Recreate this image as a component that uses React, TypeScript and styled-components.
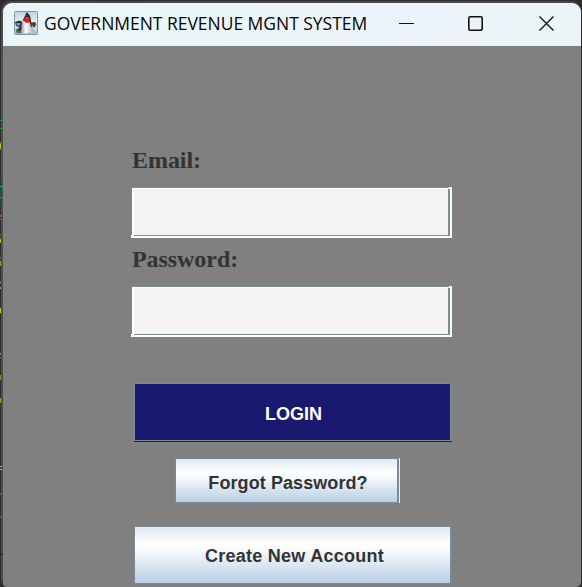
import React from "react";
import styled, { createGlobalStyle } from "styled-components";

const slate = "#7a8a99";

const GlobalStyle = createGlobalStyle`
  * { box-sizing: border-box; }
  html, body { margin: 0; padding: 0; background: #2d2d2e; overflow: hidden; }
`;

const Desktop = styled.div`
  position: relative;
  width: 582px;
  height: 587px;
  padding: 1px 1px 0 1px;
  background: #2d2d2e;
  overflow: hidden;
`;

const Frame = styled.div`
  height: 586px;
  padding: 2px 0 0 2px;
  border-radius: 10px 10px 9px 9px;
  background: linear-gradient(#484848, #505050 60px, #4c4c4c);
`;

const Window = styled.main`
  display: flex;
  flex-direction: column;
  width: 578px;
  height: 584px;
  border-radius: 9px 9px 5px 4px;
  overflow: hidden;
  background: #808080;
`;

const TitleBar = styled.header`
  display: flex;
  align-items: flex-start;
  flex: 0 0 43px;
  padding: 8px 0 0 11px;
  background: linear-gradient(90deg, #e9f6f6 0%, #eaf5f7 40%, #ecf3fb 70%, #ebf4f8 84%, #ebf4f6 100%);
`;

const Title = styled.h1`
  margin: 0 0 0 6px;
  width: 327px;
  font: 400 17.5px/24px "Open Sans", sans-serif;
  letter-spacing: -0.03px;
  white-space: nowrap;
  color: #050505;
`;

const Controls = styled.div`
  display: flex;
  margin: 4px 0 0 28px;
  gap: 54px;
`;

const Form = styled.form`
  display: flex;
  flex-direction: column;
  align-items: flex-start;
  padding: 100px 0 0 128px;
`;

const Label = styled.label`
  height: 41px;
  padding-left: 1px;
  font: 700 24px/29px "Liberation Serif", serif;
  letter-spacing: -0.06px;
  color: #333;
`;

const FieldFrame = styled.div`
  width: 321px;
  height: 51px;
  margin-bottom: 7px;
  background:
    linear-gradient(${slate}, ${slate}) 0 0 / 318px 1px no-repeat,
    linear-gradient(${slate}, ${slate}) 0 0 / 1px 48px no-repeat,
    linear-gradient(${slate}, ${slate}) 317px 2px / 2px 47px no-repeat,
    linear-gradient(${slate}, ${slate}) 3px 48px / 316px 1px no-repeat,
    #fff;
  padding: 2px 4px 3px 3px;
`;

const Field = styled.input`
  display: block;
  width: 314px;
  height: 46px;
  border: 0;
  padding: 0 8px;
  outline: 0;
  background: #f4f4f4;
  font: 18px "Liberation Sans", sans-serif;
`;

const MetalButton = styled.button<{ $primary?: boolean }>`
  width: 318px;
  height: 58px;
  padding: 0;
  border: 1px solid ${slate};
  border-right-width: 2px;
  background: ${(p) => (p.$primary ? "#191970" : "linear-gradient(#dde8f3, #fff 30%, #fff 34%, #b8cfe5)")};
  color: ${(p) => (p.$primary ? "#fff" : "#333")};
  font: 700 18px/20px "Liberation Sans", sans-serif;
`;

const LoginButton = styled(MetalButton)`
  margin: 39px 0 0 3px;
  padding: 4px 0 0 2px;
  box-shadow: 0 1px #191970;
`;

const ForgotButton = styled(MetalButton)`
  width: 224px;
  height: 45px;
  margin: 17px 0 0 44px;
  padding: 4px 0 0 3px;
  letter-spacing: 0.08px;
  box-shadow: 1px 0 #e8f0f7;
`;

const CreateButton = styled(MetalButton)`
  margin: 23px 0 0 3px;
  padding: 1px 0 0 4px;
  letter-spacing: 0.27px;
`;

const Speck = styled.i<{ $y: number; $h: number; $w: number; $color: string }>`
  position: absolute;
  left: 0;
  top: ${(p) => p.$y}px;
  width: ${(p) => p.$w}px;
  height: ${(p) => p.$h}px;
  background: ${(p) => p.$color};
`;

/* Coloured code from the editor showing past the window edge. */
const specks: [number, number, number, string][] = [
  [120, 1, 3, "#268844"], [128, 1, 3, "#268844"], [142, 8, 1, "#8a8a18"], [144, 4, 1, "#85d62d"],
  [181, 24, 2, "#2c493d"], [186, 1, 3, "#13a899"], [197, 1, 3, "#2b8b76"],
  [215, 2, 1, "#d15b2b"], [219, 1, 1, "#925335"], [234, 2, 1, "#775229"],
  [238, 5, 1, "#91852a"], [240, 2, 1, "#8ed72c"], [257, 2, 1, "#755127"],
  [261, 5, 1, "#81a52a"], [281, 3, 1, "#477b43"], [287, 2, 1, "#70ad9b"],
  [308, 5, 1, "#9fda3c"], [353, 2, 1, "#d07428"], [357, 1, 1, "#9a6335"],
  [375, 5, 1, "#8c8d25"], [398, 5, 1, "#ae9b2b"], [466, 1, 2, "#b3aa95"],
  [469, 1, 2, "#aaa"], [493, 2, 1, "#84522a"], [516, 2, 1, "#84522a"], [554, 1, 3, "#242424"],
];

const JavaIcon = () => (
  <svg width="24" height="24" viewBox="0 0 24 24" aria-hidden="true">
    <defs>
      <linearGradient id="tile" x2="0" y2="1">
        <stop stopColor="#bfd3e2" /><stop offset=".5" stopColor="#eaf2f7" /><stop offset="1" stopColor="#a4bacf" />
      </linearGradient>
      <linearGradient id="body"><stop stopColor="#85898b" /><stop offset=".4" stopColor="#fff" /><stop offset="1" stopColor="#aaa" /></linearGradient>
    </defs>
    <rect x=".5" y=".5" width="23" height="23" rx="1" fill="url(#tile)" stroke="#8298ad" />
    <path d="M1 11 5 9.5 9 11 8 17 2 15Z" fill="#27323b" />
    <path d="M2.5 12h3.5v2.4H2.5Z" fill="#5fa0cf" />
    <path d="M17 11.5 21 11 22.5 13 20.5 16.5 17 15Z" fill="#454545" />
    <path d="M1.5 19Q5 16 9 17L8 22 3 22.5Z" fill="#606365" />
    <path d="M8 11 Q11 8 16 10 L19 16 20 21.5 Q17 23 15 21 Q10 24 6.5 21Z" fill="url(#body)" />
    <path d="M12.5 1Q17 4 17 10L18.2 17Q16 15 15.5 11L8.5 9.5 11 5Z" fill="#2d2d2d" />
    <path d="M7 14 7.5 18 5.5 21Q3.5 19 5.5 16Z" fill="#333637" />
    <circle cx="13.2" cy="8.9" r="2.9" fill="#e81919" />
    <path d="M11.5 7.7q1.4-1.2 2.5-.4" fill="none" stroke="#ff5b50" />
  </svg>
);

export default function App() {
  return (
    <Desktop>
      <GlobalStyle />
      <Frame>
        <Window>
          <TitleBar>
            <JavaIcon />
            <Title>GOVERNMENT REVENUE MGNT SYSTEM</Title>
            <Controls>
              <svg width="15" height="16" viewBox="0 0 15 16" aria-label="Minimize">
                <path d="M0 8.5h15" stroke="#111" />
              </svg>
              <svg width="16" height="16" viewBox="0 0 16 16" aria-label="Maximize">
                <rect x="0.8" y="1.8" width="13.4" height="13.4" rx="1.5" fill="none" stroke="#111" strokeWidth="1.6" />
              </svg>
              <svg width="16" height="16" viewBox="0 0 16 16" aria-label="Close">
                <path d="m1.5 1.5 14 14m0-14L1.5 15.5" stroke="#111" strokeWidth="1.4" />
              </svg>
            </Controls>
          </TitleBar>
          <Form onSubmit={(e) => e.preventDefault()}>
            <Label htmlFor="email">Email:</Label>
            <FieldFrame><Field id="email" type="text" /></FieldFrame>
            <Label htmlFor="password">Password:</Label>
            <FieldFrame><Field id="password" type="password" /></FieldFrame>
            <LoginButton $primary>LOGIN</LoginButton>
            <ForgotButton type="button">Forgot Password?</ForgotButton>
            <CreateButton type="button">Create New Account</CreateButton>
          </Form>
        </Window>
      </Frame>
      {specks.map(([y, h, w, color]) => (
        <Speck key={y} $y={y} $h={h} $w={w} $color={color} />
      ))}
    </Desktop>
  );
}
